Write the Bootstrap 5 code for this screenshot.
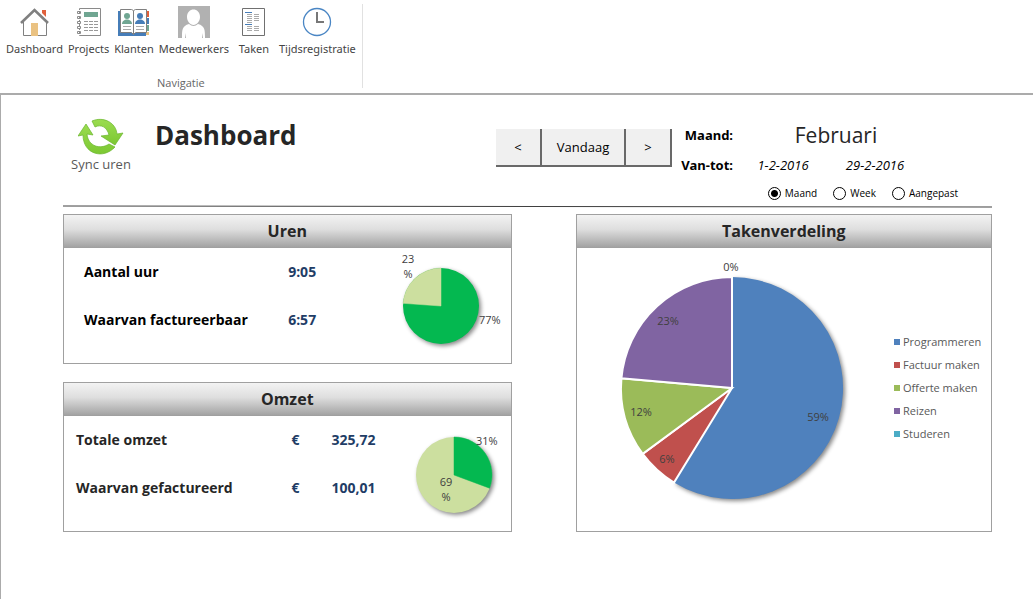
<!DOCTYPE html>
<html lang="nl">
<head>
<meta charset="utf-8">
<meta name="viewport" content="width=device-width, initial-scale=1">
<title>Dashboard</title>
<link href="https://cdn.jsdelivr.net/npm/bootstrap@5.3.0/dist/css/bootstrap.min.css" rel="stylesheet">
<style>
  body { font-family: "Open Sans", "Noto Sans", sans-serif; color: #262626; background: #fff; font-size: 12px; line-height: 16px; }
  .ribbon { height: 95px; border-bottom: 2px solid #ababab; }
  .ribbon-group { height: 84px; margin-top: 4px; padding: 0 6px; border-right: 1px solid #e1e1e1; }
  .ribbon-nav { gap: 5px; }
  .ribbon-link { color: #444; text-decoration: none; white-space: nowrap; font-family: "Noto Sans", sans-serif; font-size: 11px; }
  .ribbon-link svg { display: block; margin: 2px auto 3px; }
  .ribbon-caption { color: #666; font-size: 11px; line-height: 10px; }
  .sheet { border-left: 1px solid #ababab; min-height: calc(100vh - 95px); padding: 20px 41px 0 62px; }
  .sheet-head { height: 90px; }
  .sync-btn { width: 60px; margin-left: 8px; margin-top: 2px; color: #595959; white-space: nowrap; }
  .sync-btn svg { display: block; margin: 0 auto; }
  .sync-text { display: block; font-size: 13px; line-height: 14px; }
  .page-title { font-size: 26px; line-height: 40px; font-weight: 700; margin-left: 24px; }
  .step-group { margin-top: 14px; }
  .step-btn { height: 38px; width: 46px; background: #f0f0f0; border: 0 solid #696969; border-width: 0 2px 2px 0; color: #000; font-size: 13px; }
  .step-wide { width: 84px; }
  .period { width: 311px; margin-left: 9px; color: #000; }
  .period-label { width: 52px; font-size: 13px; font-weight: 700; text-align: right; white-space: nowrap; font-family: "Noto Sans", sans-serif; }
  .month-name { width: 206px; font-size: 21px; line-height: 40px; color: #262626; }
  .date-row { margin-top: 2px; }
  .date-text { font-size: 13px; font-style: italic; width: 92px; text-align: center; }
  .mode-row { margin-top: 12px; padding-right: 34px; gap: 16px; }
  .mode-label { font-size: 10px; line-height: 16px; }
  .mode-radio { appearance: none; width: 13px; height: 13px; border: 1px solid #000; border-radius: 50%; margin: 0 4px 0 0; background: #fff; }
  .mode-radio:checked { background: radial-gradient(circle, #000 0 3px, #fff 4px); }
  .rule-line { display: block; width: 100%; height: 3px; }
  .boards { display: grid; grid-template-columns: 448fr 416fr; column-gap: 64px; margin-top: 6px; }
  .panel { border: 1px solid #a0a0a0; background: #fff; }
  .panel-title { font-size: 16px; line-height: 32px; height: 33px; margin: 0; font-weight: 700; text-align: center; background: linear-gradient(#f3f3f3, #dedede 45%, #a3a3a3); border-bottom: 1px solid #a0a0a0; }
  .figures { table-layout: fixed; font-size: 14px; font-weight: 700; color: #000; height: 96px; }
  .figures th, .figures td { height: 48px; padding: 0; white-space: nowrap; }
  .figures th { width: 67%; padding-left: 20px; }
  .figures td { color: #1f3d66; }
  .revenue { color: #262626; }
  .revenue th { width: 68%; padding-left: 12px; }
  .revenue .currency { width: 12%; }
  .mini-pie { width: 112px; height: 115px; flex: none; }
  .pie-shadow { filter: drop-shadow(2px 2px 2px #888); }
  svg text { font-size: 11px; fill: #404040; }
  .legend-list { font-size: 11px; line-height: 23px; color: #595959; width: 97px; margin: 82px 0 0; white-space: nowrap; }
  .swatch { width: 6px; height: 6px; margin-right: 3px; }
</style>
</head>
<body>
<header class="ribbon d-flex">
  <div class="ribbon-group d-flex flex-column justify-content-between">
    <nav class="ribbon-nav d-flex text-center">
      <a class="ribbon-link" href="#"><svg width="32" height="32" viewBox="0 0 32 32"><path fill="#fff" stroke="#808080" d="M5.500 15v14.500h23V15L16.500 4z"/><path fill="#e0603c" d="M24 4h4v7l-4-4z"/><path fill="#eac282" d="M13 17h7v13h-7z"/><path fill="none" stroke="#808080" stroke-width="2.600" d="M3 17L16.500 4 30 17"/></svg>Dashboard</a>
      <a class="ribbon-link" href="#"><svg width="32" height="32" viewBox="0 0 32 32"><path fill="#fff" stroke="#8a8a8a" d="M6.500 2.500h21v27h-21z"/><path stroke="#fff" stroke-width="4" stroke-dasharray="2 2" d="M6 4v25"/><path fill="none" stroke="#8a8a8a" d="M4.500 5.500h3v2h-3zM4.500 10.500h3v2h-3zM4.500 15.500h3v2h-3zM4.500 20.500h3v2h-3zM4.500 25.500h3v2h-3z"/><path fill="#70a692" d="M11 6h14v5H11z"/><path stroke="#999" stroke-dasharray="4 1" d="M11 15.500h14M11 18.500h14M11 21.500h14M11 24.500h14"/></svg>Projects</a>
      <a class="ribbon-link" href="#"><svg width="32" height="32" viewBox="0 0 32 32"><path fill="#467db8" d="M0 5h14v22h14v3H0z"/><path fill="#e0603c" d="M28 5h3v6h-3z"/><path fill="#467db8" d="M28 12h3v6h-3z"/><path fill="#70a692" d="M28 19h3v6h-3z"/><path fill="#eac282" d="M28 26h3v3h-3z"/><path fill="#fff" stroke="#808080" d="M2.500 3.500h11l2 1 2-1h11v23h-11l-2 2-2-2h-11zM15.500 5v23"/><g fill="#70a692"><circle cx="9" cy="10" r="3"/><path d="M4 18c0-6 10-6 10 0z"/></g><g fill="#467db8"><circle cx="22" cy="10" r="3"/><path d="M17 18c0-6 10-6 10 0z"/></g><path stroke="#aaa" d="M5 20.500h8M5 23.500h8M18 20.500h8M18 23.500h8"/></svg>Klanten</a>
      <a class="ribbon-link" href="#"><svg width="32" height="32" viewBox="0 0 32 32"><path fill="#b1b1b1" d="M0 0h32v32H0z"/><path fill="#fff" d="M9 11c0-10 13-10 13 0 0 4-3 8-6.500 8S9 15 9 11zM4 32c0-8 0-12 7-14q4.500 4 9 0c7 2 7 6 7 14h-2v-5l-1 5H8l-1-5v5z"/></svg>Medewerkers</a>
      <a class="ribbon-link mx-1" href="#"><svg width="32" height="32" viewBox="0 0 32 32"><path fill="#fff" stroke="#707070" d="M4.500 2.500h22v27h-22z"/><path stroke="#aaa" d="M9 8.500h5M9 10.500h5M9 12.500h5M9 14.500h5M9 16.500h5M9 20.500h5M9 22.500h5M9 24.500h5M16 8.500h5M16 10.500h5M16 12.500h5M16 14.500h5M16 20.500h5M16 22.500h5M16 24.500h5"/><path stroke="#467db8" d="M7 6.500h7M7 18.500h7"/></svg>Taken</a>
      <a class="ribbon-link" href="#"><svg width="32" height="32" viewBox="0 0 32 32"><circle cx="16" cy="16" r="13.500" fill="#fff" stroke="#4a86c4" stroke-width="1.300"/><path fill="none" stroke="#777" stroke-width="2" d="M16 6v10h7"/></svg>Tijdsregistratie</a>
    </nav>
    <div class="ribbon-caption text-center">Navigatie</div>
  </div>
</header>

<main class="sheet">
  <div class="sheet-head d-flex align-items-start">
    <button type="button" class="sync-btn btn p-0 border-0"><svg width="46" height="40" viewBox="0 0 46 40"><defs><linearGradient id="leaf" x2="0" y2="1"><stop offset="0" stop-color="#9bdc50"/><stop offset="1" stop-color="#7cc832"/></linearGradient></defs><g fill="url(#leaf)" stroke="#68b52c" stroke-width=".7"><path d="M14 4C26-1 38 6 39 17l6-1-8 12-14-9 8-1C29 10 23 7 17 10z"/><path d="M8 7l7 11-6-1C10 29 22 33 31 27l6 3C25 43 5 37 5 18l-5 1z"/></g></svg>
      <span class="sync-text">Sync uren</span></button>
    <h1 class="page-title mb-0">Dashboard</h1>
    <div class="step-group ms-auto d-flex">
      <button type="button" class="step-btn">&lt;</button>
      <button type="button" class="step-btn step-wide">Vandaag</button>
      <button type="button" class="step-btn">&gt;</button>
    </div>
    <div class="period">
      <div class="d-flex align-items-center">
        <div class="period-label">Maand:</div>
        <div class="month-name text-center">Februari</div>
      </div>
      <div class="date-row d-flex align-items-center">
        <div class="period-label">Van-tot:</div>
        <div class="date-text ms-1">1-2-2016</div>
        <div class="date-text">29-2-2016</div>
      </div>
      <div class="mode-row d-flex justify-content-end">
        <label class="mode-label d-flex align-items-center"><input class="mode-radio" type="radio" name="mode" checked>Maand</label>
        <label class="mode-label d-flex align-items-center"><input class="mode-radio" type="radio" name="mode">Week</label>
        <label class="mode-label d-flex align-items-center"><input class="mode-radio" type="radio" name="mode">Aangepast</label>
      </div>
    </div>
  </div>
  <svg class="rule-line"><line x1="0" y1="1" x2="100%" y2="2" stroke="#404040"/></svg>

  <div class="boards">
    <div class="d-flex flex-column justify-content-between">
      <section class="panel">
        <h2 class="panel-title">Uren</h2>
        <div class="d-flex">
          <table class="figures flex-grow-1">
            <tr><th scope="row">Aantal uur</th><td>9:05</td></tr>
            <tr><th scope="row">Waarvan factureerbaar</th><td>6:57</td></tr>
          </table>
          <svg class="mini-pie" viewBox="0 0 112 115"><g class="pie-shadow"><circle cx="42" cy="58" r="38" fill="#04b850"/><path fill="#ccdf9f" stroke="#ccdf9f" stroke-width=".5" d="M42 58L4.100 55.300A38 38 0 0 1 42 20z"/></g><text x="9" y="15" text-anchor="middle">23</text><text x="9" y="30" text-anchor="middle">%</text><text x="80" y="76">77%</text></svg>
        </div>
      </section>
      <section class="panel">
        <h2 class="panel-title">Omzet</h2>
        <div class="d-flex">
          <table class="figures revenue flex-grow-1">
            <tr><th scope="row">Totale omzet</th><td class="currency">€</td><td>325,72</td></tr>
            <tr><th scope="row">Waarvan gefactureerd</th><td class="currency">€</td><td>100,01</td></tr>
          </table>
          <svg class="mini-pie" viewBox="0 0 112 115"><g class="pie-shadow"><circle cx="55" cy="59" r="38" fill="#ccdf9f"/><path fill="#04b850" stroke="#04b850" stroke-width=".5" d="M55 59V21A38 38 0 0 1 90.600 72.200z"/></g><text x="77" y="29">31%</text><text x="47" y="70" text-anchor="middle">69</text><text x="47" y="85" text-anchor="middle">%</text></svg>
        </div>
      </section>
    </div>
    <section class="panel">
      <h2 class="panel-title">Takenverdeling</h2>
      <div class="d-flex justify-content-between">
        <svg width="308" height="283" viewBox="0 0 308 283"><g class="pie-shadow"><path fill="#4f81bd" d="M155 140V29A111 111 0 1 1 97 234.600z"/></g><g stroke="#fff" stroke-width="2"><path fill="#c0504d" d="M155 140L97 234.600A111 111 0 0 1 65.700 205.900z"/><path fill="#9bbb59" d="M155 140L65.700 205.900A111 111 0 0 1 44.400 130.300z"/><path fill="#8064a2" d="M155 140L44.400 130.300A111 111 0 0 1 155 29z"/></g><g text-anchor="middle"><text x="154" y="23">0%</text><text x="91" y="77">23%</text><text x="64" y="168">12%</text><text x="90" y="215">6%</text><text x="241" y="173">59%</text></g></svg>
        <ul class="legend-list list-unstyled">
          <li class="d-flex align-items-center"><span class="swatch" style="background:#4f81bd"></span>Programmeren</li>
          <li class="d-flex align-items-center"><span class="swatch" style="background:#c0504d"></span>Factuur maken</li>
          <li class="d-flex align-items-center"><span class="swatch" style="background:#9bbb59"></span>Offerte maken</li>
          <li class="d-flex align-items-center"><span class="swatch" style="background:#8064a2"></span>Reizen</li>
          <li class="d-flex align-items-center"><span class="swatch" style="background:#4bacc6"></span>Studeren</li>
        </ul>
      </div>
    </section>
  </div>
</main>
<script src="https://cdn.jsdelivr.net/npm/bootstrap@5.3.0/dist/js/bootstrap.bundle.min.js"></script>
</body>
</html>
